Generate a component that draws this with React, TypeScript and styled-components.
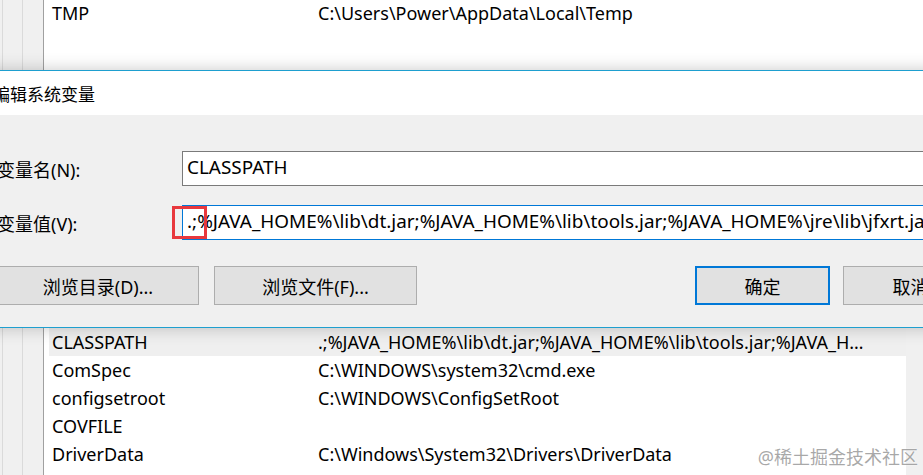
import React from 'react';
import styled, { createGlobalStyle } from 'styled-components';

const GlobalStyle = createGlobalStyle`
  html, body {
    margin: 0;
    padding: 0;
    width: 923px;
    height: 475px;
    overflow: hidden;
    background: #ffffff;
  }
  body {
    font-family: "Noto Sans", "Noto Sans CJK SC", sans-serif;
    color: #000;
  }
`;

const Screen = styled.div`
  position: relative;
  width: 923px;
  height: 475px;
  overflow: hidden;
  display: flex;
  flex-direction: column;
`;

const Pane = styled.div<{ h?: number }>`
  display: flex;
  flex: ${({ h }) => (h ? `0 0 ${h}px` : '1 1 auto')};
  min-height: 0;
  overflow: hidden;
`;

const Gutter = styled.div`
  flex: 0 0 43px;
  display: grid;
  grid-template-columns: 3px 20px 20px;
  background: #f0f0f0;
  border-right: 1px solid #a0a0a0;
`;

const GutterCol = styled.div`
  border-right: 1px solid #dadada;
  &:last-child {
    border-right: none;
  }
`;

const List = styled.div`
  flex: 1 1 auto;
  display: flex;
  flex-direction: column;
  background: #fff;
  padding-left: 5px;
  min-width: 0;
`;

const Row = styled.div<{ selected?: boolean; top?: boolean }>`
  display: grid;
  grid-template-columns: 266px 1fr;
  height: 28px;
  align-items: center;
  margin-top: ${({ top }) => (top ? '-1px' : '0')};
  background: ${({ selected }) => (selected ? '#efefef' : 'transparent')};
  font-size: 18px;
  white-space: nowrap;
`;

const Cell = styled.div<{ value?: boolean }>`
  padding-left: 3px;
  padding-right: ${({ value }) => (value ? '36px' : '0')};
  overflow: hidden;
  text-overflow: ellipsis;
  min-width: 0;
`;

const ScrollTrack = styled.div`
  flex: 0 0 17px;
  background: #f0f0f0;
`;

const Dialog = styled.div`
  position: relative;
  z-index: 2;
  flex: 0 0 auto;
  margin-left: -20px;
  width: 1013px;
  border: 1px solid #1e9fcf;
  box-shadow: 0 0 16px rgba(0, 0, 0, 0.22);
  background: #f0f0f0;
`;

const TitleBar = styled.div`
  height: 44px;
  background: #fff;
  display: flex;
  align-items: center;
  padding-left: 12px;
  font-size: 17px;
`;

const Body = styled.div`
  padding: 36px 16px 22px 16px;
  display: flex;
  flex-direction: column;
`;

const FieldRow = styled.div<{ gap?: number }>`
  display: grid;
  grid-template-columns: 185px 1fr;
  align-items: center;
  margin-bottom: ${({ gap }) => gap ?? 0}px;
`;

const Label = styled.div`
  font-size: 18px;
`;

const FieldWrap = styled.div`
  position: relative;
`;

const TextBox = styled.input<{ focused?: boolean }>`
  box-sizing: border-box;
  width: 100%;
  height: 35px;
  margin: 0;
  padding: 0 0 3px 4px;
  border: 1px solid ${({ focused }) => (focused ? '#0078d7' : '#7a7a7a')};
  background: #fff;
  font-family: "Noto Sans", "Noto Sans CJK SC", sans-serif;
  font-size: 18.9px;
  color: #000;
  outline: none;
`;

const Marker = styled.div`
  position: absolute;
  left: -10px;
  top: 1px;
  width: 35px;
  height: 33px;
  box-sizing: border-box;
  border: 3px solid #e8383d;
  pointer-events: none;
`;

const ButtonRow = styled.div`
  display: flex;
  justify-content: space-between;
`;

const ButtonGroup = styled.div<{ gap: number }>`
  display: flex;
  gap: ${({ gap }) => gap}px;
`;

const Button = styled.button<{ w: number; primary?: boolean }>`
  box-sizing: border-box;
  width: ${({ w }) => w}px;
  height: 39px;
  margin: 0;
  padding: 0;
  background: #e1e1e1;
  border: ${({ primary }) => (primary ? '2px solid #0078d7' : '1px solid #adadad')};
  font-family: "Noto Sans", "Noto Sans CJK SC", sans-serif;
  font-size: 18px;
  color: #000;
`;

const Watermark = styled.div`
  position: absolute;
  right: 5px;
  bottom: 6px;
  font-size: 18px;
  color: rgba(140, 140, 140, 0.75);
  text-shadow: 0 0 2px rgba(255, 255, 255, 0.9);
  z-index: 3;
`;

const classpath = '.;%JAVA_HOME%\\lib\\dt.jar;%JAVA_HOME%\\lib\\tools.jar;%JAVA_HOME%\\jre\\lib\\jfxrt.jar';

const systemVars = [
  { name: 'CLASSPATH', value: classpath, selected: true },
  { name: 'ComSpec', value: 'C:\\WINDOWS\\system32\\cmd.exe' },
  { name: 'configsetroot', value: 'C:\\WINDOWS\\ConfigSetRoot' },
  { name: 'COVFILE', value: '' },
  { name: 'DriverData', value: 'C:\\Windows\\System32\\Drivers\\DriverData' },
];

const GutterCols = () => (
  <Gutter>
    <GutterCol />
    <GutterCol />
    <GutterCol />
  </Gutter>
);

export default function App() {
  return (
    <>
      <GlobalStyle />
      <Screen>
        <Pane h={70}>
          <GutterCols />
          <List>
            <Row top>
              <Cell>TMP</Cell>
              <Cell value>C:\Users\Power\AppData\Local\Temp</Cell>
            </Row>
          </List>
        </Pane>

        <Dialog>
          <TitleBar>编辑系统变量</TitleBar>
          <Body>
            <FieldRow gap={19}>
              <Label>变量名(N):</Label>
              <FieldWrap>
                <TextBox defaultValue="CLASSPATH" readOnly />
              </FieldWrap>
            </FieldRow>
            <FieldRow gap={26}>
              <Label>变量值(V):</Label>
              <FieldWrap>
                <TextBox focused defaultValue={classpath} readOnly />
                <Marker />
              </FieldWrap>
            </FieldRow>
            <ButtonRow>
              <ButtonGroup gap={15}>
                <Button w={202}>浏览目录(D)...</Button>
                <Button w={203}>浏览文件(F)...</Button>
              </ButtonGroup>
              <ButtonGroup gap={13}>
                <Button w={135} primary>确定</Button>
                <Button w={135}>取消</Button>
              </ButtonGroup>
            </ButtonRow>
          </Body>
        </Dialog>

        <Pane>
          <GutterCols />
          <List>
            {systemVars.map((v) => (
              <Row key={v.name} selected={v.selected}>
                <Cell>{v.name}</Cell>
                <Cell value>{v.value}</Cell>
              </Row>
            ))}
          </List>
          <ScrollTrack />
        </Pane>

        <Watermark>@稀土掘金技术社区</Watermark>
      </Screen>
    </>
  );
}
